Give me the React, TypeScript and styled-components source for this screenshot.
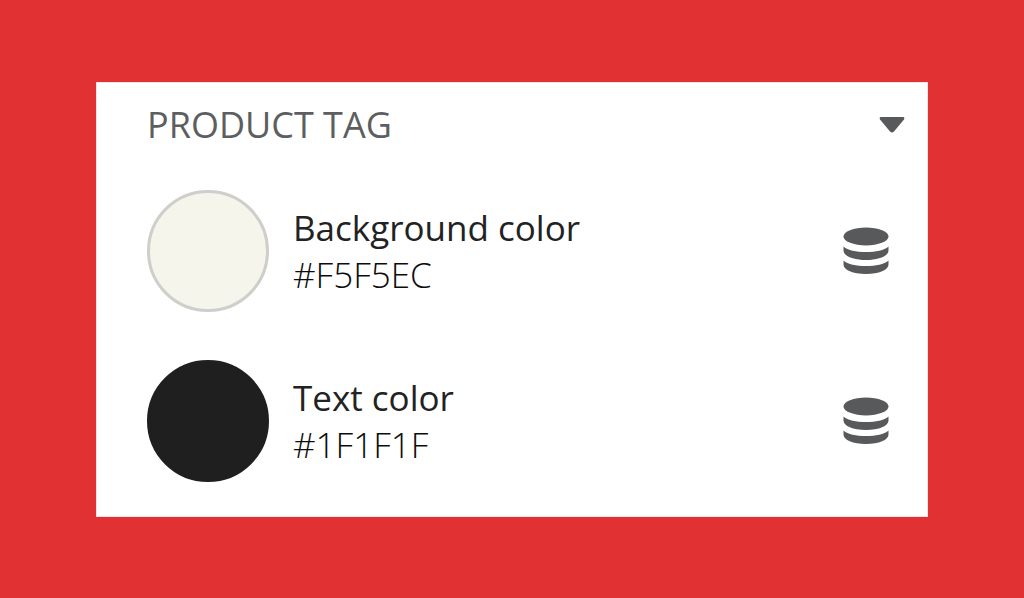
import React from "react";
import styled, { createGlobalStyle } from "styled-components";

const GlobalStyle = createGlobalStyle`
  * { box-sizing: border-box; }
  body {
    margin: 0;
    background: #e23133;
    font-family: "Open Sans", "Noto Sans", sans-serif;
  }
`;

const Page = styled.main`
  padding: 82px 96px;
`;

const Panel = styled.section`
  display: flex;
  flex-direction: column;
  gap: 41px;
  padding: 18px 22px 34px 50px;
  border: 1px solid #f6e4e4;
  background: #ffffff;
`;

const Header = styled.header`
  display: flex;
  align-items: center;
  justify-content: space-between;
`;

const Title = styled.h2`
  margin: 0;
  color: #5c5e5f;
  font-size: 36px;
  font-weight: 400;
  line-height: 48px;
`;

const IconButton = styled.button`
  display: flex;
  flex: none;
  padding: 0;
  border: 0;
  background: transparent;
  color: #58595b;
  cursor: pointer;
`;

const ColorList = styled.ul`
  display: flex;
  flex-direction: column;
  gap: 48px;
  margin: 0;
  padding: 0 16px 0 0;
  list-style: none;
`;

const ColorRow = styled.li`
  display: flex;
  align-items: center;
  gap: 24px;
`;

const Swatch = styled.button<{ $fill: string; $edge: string }>`
  flex: none;
  width: 122px;
  height: 122px;
  padding: 0;
  border: 3px solid ${(p) => p.$edge};
  border-radius: 50%;
  background: ${(p) => p.$fill};
  cursor: pointer;
`;

const ColorText = styled.div`
  flex: 1;
  min-width: 0;
  font-size: 35px;
  line-height: 47px;
`;

const ColorName = styled.div`
  color: #222222;
  font-weight: 500;
`;

const ColorValue = styled.div`
  color: #0c0c0c;
  font-weight: 300;
`;

const CaretIcon = () => (
  <svg width="26" height="16" viewBox="0 0 26 16" fill="currentColor" aria-hidden="true">
    <path d="M2 0H24Q26 0 25 2.500L15 14.500Q13 16.500 11 14.500L1 2.500Q0 0 2 0Z" />
  </svg>
);

const DatabaseIcon = () => (
  <svg width="46" height="48" viewBox="0 0 46 48" fill="currentColor" aria-hidden="true">
    <ellipse cx="23" cy="9.500" rx="22.500" ry="9" />
    <path d="M.5 19.500C5 23.500 13 25 23 25S41 23.500 45.500 19.500V23.500C45.500 29 36 33 23 33S.5 29 .5 23.500Z" />
    <path d="M.5 33.500C5 37.500 13 39 23 39S41 37.500 45.500 33.500V37.500C45.500 43 36 47 23 47S.5 43 .5 37.500Z" />
  </svg>
);

const colors = [
  { name: "Background color", value: "#F5F5EC", edge: "#cececb" },
  { name: "Text color", value: "#1F1F1F", edge: "#1f1f1f" },
];

export default function App() {
  return (
    <Page>
      <GlobalStyle />
      <Panel>
        <Header>
          <Title>PRODUCT TAG</Title>
          <IconButton type="button" aria-label="Collapse section">
            <CaretIcon />
          </IconButton>
        </Header>
        <ColorList>
          {colors.map(({ name, value, edge }) => (
            <ColorRow key={name}>
              <Swatch type="button" $fill={value} $edge={edge} aria-label={`Edit ${name}`} />
              <ColorText>
                <ColorName>{name}</ColorName>
                <ColorValue>{value}</ColorValue>
              </ColorText>
              <IconButton type="button" aria-label={`Connect ${name} to a data source`}>
                <DatabaseIcon />
              </IconButton>
            </ColorRow>
          ))}
        </ColorList>
      </Panel>
    </Page>
  );
}
